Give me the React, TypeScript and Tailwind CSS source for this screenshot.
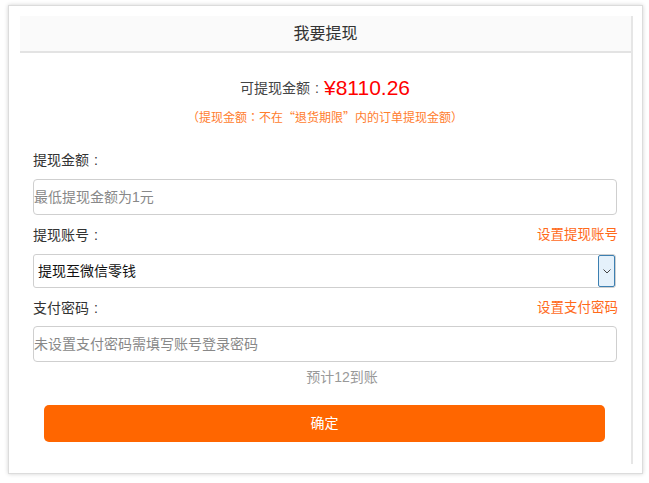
const TC = { fontFamily: '"Noto Sans CJK TC", sans-serif' };

function Colon() {
  return <span className="inline-block w-[1em] text-center">:</span>;
}

export default function App() {
  const font = { fontFamily: '"Liberation Sans", "Noto Sans CJK SC", sans-serif' };

  return (
    <div className="min-h-[483px] w-[649px] bg-white" style={font}>
      <div className="ml-[8px] pt-[5px]">
        <div className="w-[635px] h-[469px] bg-white border border-[#dcdcdc] shadow-[0_0_4px_rgba(0,0,0,0.18)] pl-[11px] pt-[10px]">
          <div className="w-[613px] h-[448px] border-r-2 border-[#e6e6e6]">
            {/* Header */}
            <div className="h-[37px] bg-[#fafafa] border-b-2 border-[#e3e3e3] flex items-center justify-center text-[16px] text-[#333]">
              我要提现
            </div>

            <div className="pl-[13px] pr-[14px]">
              {/* Balance */}
              <div className="mt-[23px] h-[24px] flex items-center justify-center text-[#444]">
                <span className="text-[14px]">
                  可提现金额<Colon />
                </span>
                <span className="text-[21px] text-[#ff0000] leading-[24px]">¥8110.26</span>
              </div>
              <div className="mt-[9px] h-[16px] leading-[16px] text-center text-[12px] text-[#ff7d2e]" style={TC}>
                （提现金额：不在“退货期限”内的订单提现金额）
              </div>

              {/* Amount */}
              <div className="mt-[25px] h-[20px] leading-[20px] text-[14px] text-[#333]">
                提现金额<Colon />
              </div>
              <div className="mt-[9px] h-[36px] border border-[#cfcfcf] rounded-[4px] flex items-center text-[14px] text-[#888]">
                最低提现金额为1元
              </div>

              {/* Account */}
              <div className="mt-[10px] h-[20px] leading-[20px] flex items-center justify-between">
                <span className="text-[14px] text-[#333]">
                  提现账号<Colon />
                </span>
                <span className="text-[13.5px] text-[#ff6a1a] -mr-[1px]">设置提现账号</span>
              </div>
              <div className="mt-[9px] h-[34px] mr-[1px] border border-[#cfcfcf] rounded-[3px] flex items-center justify-between">
                <span className="pl-[4px] text-[14px] text-[#111]">提现至微信零钱</span>
                <span className="w-[17px] h-[32px] bg-[#e5f1fb] border border-[#3c7fb1] rounded-[2px] flex items-center justify-center">
                  <svg width="8" height="5" viewBox="0 0 8 5">
                    <path d="M0.5 0.5 L4 4 L7.5 0.5" fill="none" stroke="#444" strokeWidth="1" />
                  </svg>
                </span>
              </div>

              {/* Password */}
              <div className="mt-[10px] h-[20px] leading-[20px] flex items-center justify-between">
                <span className="text-[14px] text-[#333]">
                  支付密码<Colon />
                </span>
                <span className="text-[13.5px] text-[#ff6a1a] -mr-[1px]">设置支付密码</span>
              </div>
              <div className="mt-[8px] h-[36px] border border-[#cfcfcf] rounded-[4px] flex items-center text-[14px] text-[#888]">
                未设置支付密码需填写账号登录密码
              </div>
              <div className="mt-[5px] h-[20px] leading-[20px] text-center pl-[34px] text-[14px] text-[#999]">
                预计12到账
              </div>

              <button className="mt-[18px] ml-[11px] w-[561px] h-[37px] rounded-[5px] bg-[#ff6600] text-white text-[14px] flex items-center justify-center">
                确定
              </button>
            </div>
          </div>
        </div>
      </div>
    </div>
  );
}
